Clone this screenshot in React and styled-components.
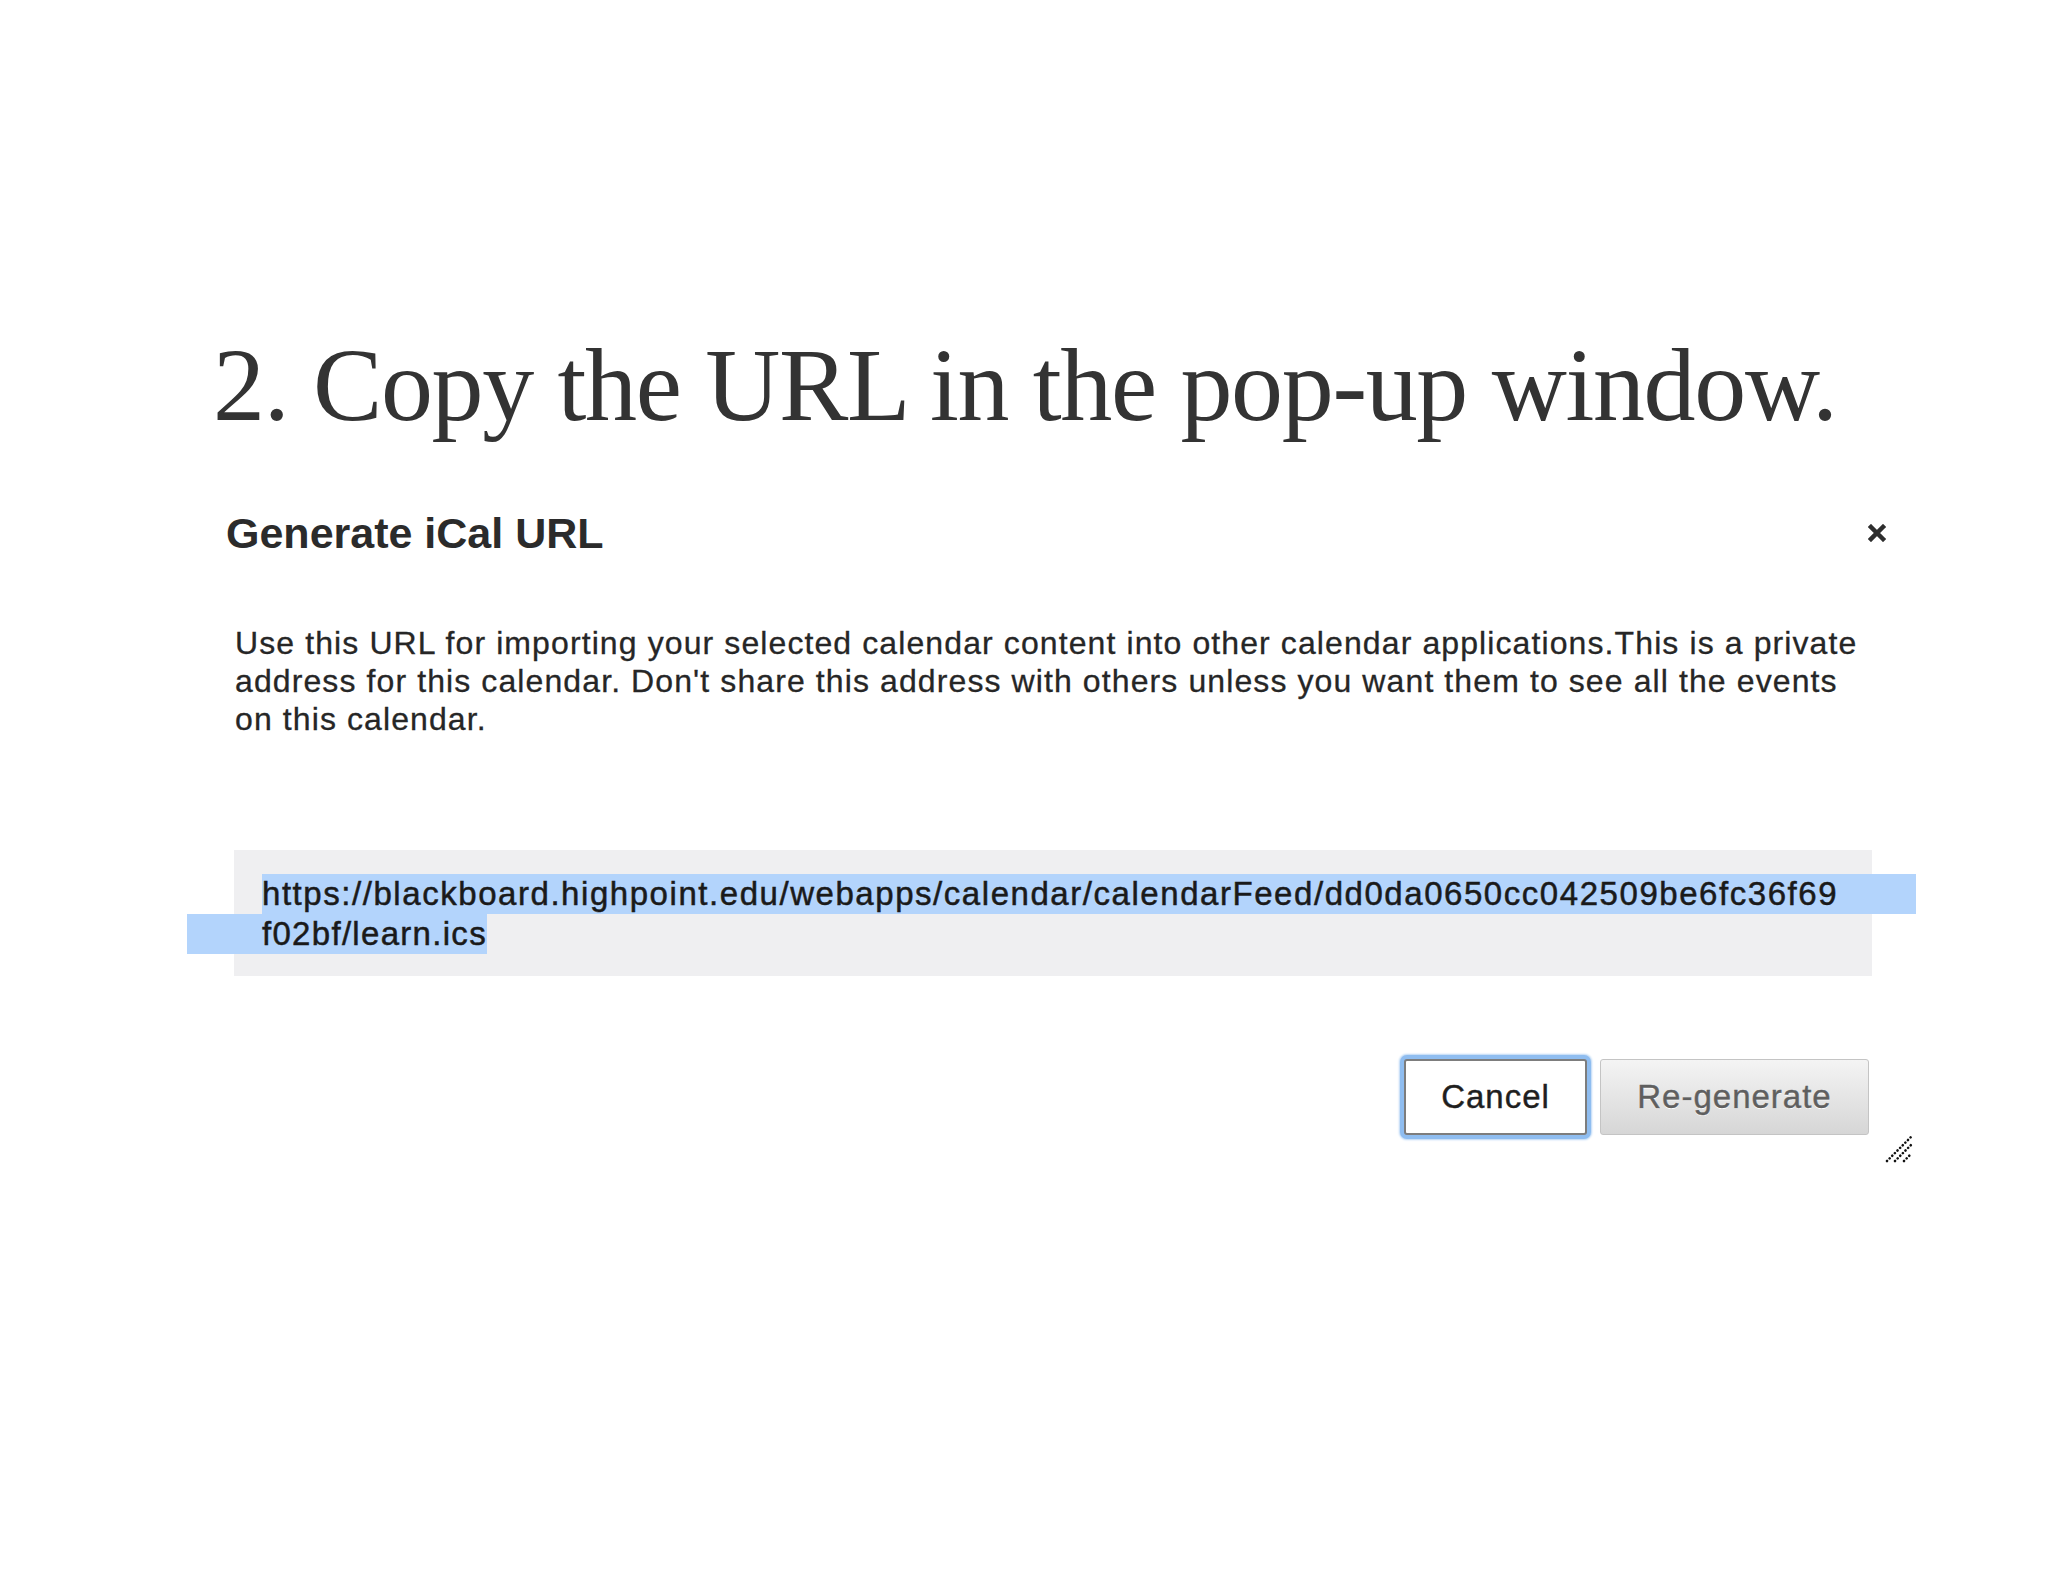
import React from 'react';
import styled, { createGlobalStyle } from 'styled-components';

const GlobalStyle = createGlobalStyle`
    html, body {
        margin: 0;
        padding: 0;
        background: #ffffff;
    }
`;

const Page = styled.div`
    width: 2048px;
    min-height: 1582px;
    padding-top: 333px;
    box-sizing: border-box;
`;

const Heading = styled.h1`
    margin: 0 0 45px 213px;
    font-family: 'Liberation Serif', 'Times New Roman', serif;
    font-weight: normal;
    font-size: 104px;
    line-height: 104px;
    letter-spacing: -1.35px;
    color: #333333;
    white-space: nowrap;
`;

const Dialog = styled.div`
    position: relative;
    margin-left: 187px;
    width: 1729px;
    height: 684px;
    box-sizing: border-box;
    background: #ffffff;
    font-family: 'Liberation Sans', Arial, Helvetica, sans-serif;
`;

const Header = styled.div`
    height: 102px;
    display: flex;
    align-items: center;
    justify-content: space-between;
    padding: 0 30px 0 39px;
`;

const DialogTitle = styled.h2`
    margin: 0;
    font-size: 43px;
    font-weight: bold;
    color: #2b2b2b;
`;

const CloseButton = styled.button`
    border: none;
    background: none;
    padding: 0;
    width: 18px;
    height: 18px;
    display: flex;
    cursor: pointer;
`;

const Body = styled.div`
    padding: 40px 44px 0 47px;
`;

const Intro = styled.p`
    margin: 0 0 112px 1px;
    font-size: 32px;
    line-height: 38px;
    letter-spacing: 1.1px;
    color: #262626;
    white-space: nowrap;
    -webkit-text-stroke: 0.3px #262626;
`;

const UrlBox = styled.div`
    background: #efeff1;
    padding: 24px 30px 22px 28px;
    font-size: 33px;
    line-height: 40px;
    letter-spacing: 1.55px;
    color: #1a1a1a;
    white-space: nowrap;
    -webkit-text-stroke: 0.5px #1a1a1a;
`;

const SelectedLine = styled.span`
    display: block;
    background: #b3d4fc;
    margin-right: -74px;
`;

const SelectedTail = styled.span`
    display: inline-block;
    background: #b3d4fc;
    margin-left: -75px;
    padding-left: 75px;
    letter-spacing: 1.3px;
`;

const Actions = styled.div`
    display: flex;
    justify-content: flex-end;
    gap: 13px;
    margin-top: 83px;
    padding-right: 3px;
`;

const Button = styled.button`
    height: 76px;
    box-sizing: border-box;
    font-family: 'Liberation Sans', Arial, Helvetica, sans-serif;
    font-size: 33px;
    letter-spacing: 1px;
    border-radius: 3px;
    cursor: pointer;
    width: ${p => p.$width}px;
    color: ${p => (p.$primary ? '#1f1f1f' : '#5f5f5f')};
    -webkit-text-stroke: 0.4px ${p => (p.$primary ? '#1f1f1f' : '#5f5f5f')};
    background: ${p => (p.$primary ? '#ffffff' : 'linear-gradient(#f4f4f4, #d6d6d6)')};
    border: ${p => (p.$primary ? '2px solid #7d7d7d' : '1px solid #c4c4c4')};
    box-shadow: ${p => (p.$primary ? '0 0 0 4px #8fbdf0, 0 0 2px 5px #b9d6f5' : 'none')};
    text-shadow: ${p => (p.$primary ? 'none' : '0 1px 0 #ffffff')};
`;

const ResizeHandle = styled.svg`
    position: absolute;
    right: 3px;
    bottom: 3px;
`;

const CloseIcon = () => (
    <svg width="18" height="18" viewBox="0 0 18 18">
        <path d="M3 3 L15 15 M15 3 L3 15" stroke="#2e2e2e" strokeWidth="4.5" strokeLinecap="square" />
    </svg>
);

const App = () => {
    return (
        <Page>
            <GlobalStyle />
            <Heading>2. Copy the URL in the pop-up window.</Heading>
            <Dialog>
                <Header>
                    <DialogTitle>Generate iCal URL</DialogTitle>
                    <CloseButton aria-label="Close">
                        <CloseIcon />
                    </CloseButton>
                </Header>
                <Body>
                    <Intro>
                        Use this URL for importing your selected calendar content into other calendar applications.This is a private
                        <br />
                        address for this calendar. Don't share this address with others unless you want them to see all the events
                        <br />
                        on this calendar.
                    </Intro>
                    <UrlBox>
                        <SelectedLine>https://blackboard.highpoint.edu/webapps/calendar/calendarFeed/dd0da0650cc042509be6fc36f69</SelectedLine>
                        <SelectedTail>f02bf/learn.ics</SelectedTail>
                    </UrlBox>
                    <Actions>
                        <Button $primary $width={183}>Cancel</Button>
                        <Button $width={269}>Re-generate</Button>
                    </Actions>
                </Body>
                <ResizeHandle width="28" height="28" viewBox="0 0 28 28">
                    <g stroke="#111" strokeWidth="2.6" strokeLinecap="round" strokeDasharray="0.1 3.6">
                        <line x1="2" y1="26" x2="26" y2="2" />
                        <line x1="10" y1="26" x2="26" y2="10" />
                        <line x1="19" y1="26" x2="26" y2="19" />
                    </g>
                </ResizeHandle>
            </Dialog>
        </Page>
    );
};

export default App;
